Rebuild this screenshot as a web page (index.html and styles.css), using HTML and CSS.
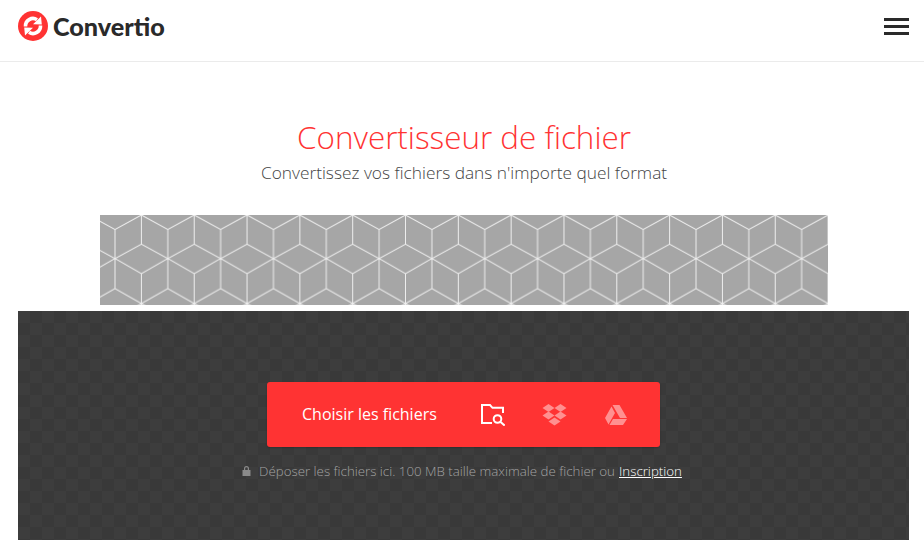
FILE: index.html
```html
<!DOCTYPE html>
<html lang="fr">
<head>
<meta charset="utf-8">
<title>Convertio</title>
<link rel="stylesheet" href="styles.css">
</head>
<body>
<header class="topbar">
  <a class="brand" href="#">
    <svg class="brand-mark" viewBox="0 0 30 30" aria-hidden="true">
      <circle cx="15" cy="15" r="15" fill="#ff3333"/>
      <path d="M7.500 15.500A7.500 7.500 0 0 1 19 8.700M22.500 14.500A7.500 7.500 0 0 1 11 21.300" fill="none" stroke="#fff" stroke-width="3.600"/>
      <path d="M23 5.500L15 13.200L23.800 13.600ZM7 24.500L15 16.800L6.200 16.400Z" fill="#fff"/>
    </svg>
    <span class="brand-name">Convertio</span>
  </a>
  <button class="menu" aria-label="Menu"><span></span><span></span><span></span></button>
</header>
<main class="content">
  <h1 class="title">Convertisseur de fichier</h1>
  <p class="subtitle">Convertissez vos fichiers dans n'importe quel format</p>
  <div class="banner">
    <svg class="banner-art" width="728" height="90" aria-hidden="true">
      <defs>
        <pattern id="cubes" patternUnits="userSpaceOnUse" width="52.82" height="88.6" x="15" y="0">
          <path d="M26.41 0V29.3M0 14.5V73.6M52.82 14.5V73.6M26.41 0L0 14.5M26.41 0L52.82 14.5M0 43.6L26.41 29.3L52.82 43.6M0 43.6L26.41 58.6L52.82 43.6M26.41 58.6V88.6M0 73.6L26.41 88.6L52.82 73.6" fill="none" stroke="#eeeeee" stroke-width="1"/>
        </pattern>
      </defs>
      <rect width="728" height="90" fill="#a6a6a6"/>
      <rect width="728" height="90" fill="url(#cubes)"/>
    </svg>
  </div>
  <section class="drop">
    <div class="picker">
      <span class="picker-label">Choisir les fichiers</span>
      <svg class="picker-icon folder" viewBox="0 0 24 22" aria-hidden="true">
        <path d="M11 19H1V1H9L11.5 3.800H22V9" fill="none" stroke="#fff" stroke-width="2"/>
        <circle cx="16.500" cy="15" r="3.800" fill="none" stroke="#fff" stroke-width="2"/>
        <path d="M19.300 17.800L23.700 21.600" stroke="#fff" stroke-width="2"/>
      </svg>
      <svg class="picker-icon box" viewBox="0 0 25 22" aria-hidden="true">
        <path d="M6.500 0L12.500 4L6.500 8L0.500 4ZM18.500 0L24.500 4L18.500 8L12.500 4ZM6.500 7.500L12.500 11.500L6.500 15.500L0.500 11.500ZM18.500 7.500L24.500 11.500L18.500 15.500L12.500 11.500ZM12.500 13.500L18.500 17.500L12.500 21.500L6.500 17.500Z" fill="#ff9090"/>
      </svg>
      <svg class="picker-icon drive" viewBox="0 0 22 20" aria-hidden="true">
        <path d="M7.500 0H14.500L22 13H15ZM6.500 1.500L10 8L3.500 19.500L0 13ZM8 14H22L18 20H4.500Z" fill="#ff9090"/>
      </svg>
    </div>
    <p class="note">
      <svg class="lock" viewBox="0 0 9 10" aria-hidden="true"><path d="M2 4V2.600a2.500 2.500 0 0 1 5 0V4H8.500V10H0.500V4ZM3.200 4H5.800V2.600a1.300 1.300 0 0 0-2.600 0Z" fill="#8a8a8a" fill-rule="evenodd"/></svg>
      <span class="note-text">Déposer les fichiers ici. 100 MB taille maximale de fichier ou</span>
      <a href="#">Inscription</a>
    </p>
  </section>
</main>
</body>
</html>
```

FILE: styles.css
```css
* { box-sizing: border-box; }
html, body { margin: 0; padding: 0; background: #fff; }
body { width: 924px; height: 547px; overflow: hidden; font-family: "Open Sans", "Liberation Sans", sans-serif; }

.topbar {
  height: 62px;
  border-bottom: 1px solid #ebebeb;
  padding: 0 15px 9px 18px;
  display: flex;
  align-items: center;
  justify-content: space-between;
}
.brand { display: flex; align-items: center; gap: 5px; text-decoration: none; }
.brand-mark { width: 30px; height: 30px; display: block; }
.brand-name { font-family: Lato, sans-serif; font-weight: 900; font-size: 25.2px; line-height: 30px; color: #2a2a2a; }
.menu { width: 25px; height: 17px; padding: 0; border: 0; background: none; display: flex; flex-direction: column; justify-content: space-between; }
.menu span { display: block; height: 3px; background: #2a2a2a; }

.content { display: flex; flex-direction: column; align-items: center; padding-left: 4px; }
.title { margin: 53px 0 0; font-weight: 300; font-size: 31.4px; line-height: 44px; color: #ff3333; }
.subtitle { margin: 2px 0 0; font-weight: 300; font-size: 17.3px; line-height: 24px; color: #444; }
.banner { margin-top: 30px; width: 728px; height: 90px; }
.banner-art { display: block; }

.drop {
  margin: 6px 0 0 14px;
  width: 891px;
  height: 229px;
  align-self: flex-start;
  padding-top: 71px;
  display: flex;
  flex-direction: column;
  align-items: center;
  background: repeating-conic-gradient(#393939 0 25%, #3d3d3d 0 50%) 0 0 / 24px 24px;
}
.picker {
  width: 393px;
  height: 65px;
  background: #ff3333;
  border-radius: 3px;
  display: flex;
  align-items: center;
  padding-left: 35px;
  box-shadow: 0 1px 2px rgba(0,0,0,.2);
}
.picker-label { font-size: 16px; font-weight: 400; color: #fff; width: 179px; margin-bottom: 2px; }
.picker-icon { display: block; flex: none; }
.folder { width: 24px; height: 22px; }
.box { width: 25px; height: 22px; margin: 0 0 0 36.5px; }
.drive { width: 22px; height: 20px; margin: 0 0 0 38.5px; }
.note { margin: 14px 0 0; padding-right: 3px; font-size: 13.3px; font-weight: 300; line-height: 20px; color: #a3a3a3; display: flex; align-items: center; gap: 4px; }
.lock { width: 9px; height: 10px; margin-right: 4px; }
.note a { color: #fff; text-decoration: underline; font-weight: 300; }
```
